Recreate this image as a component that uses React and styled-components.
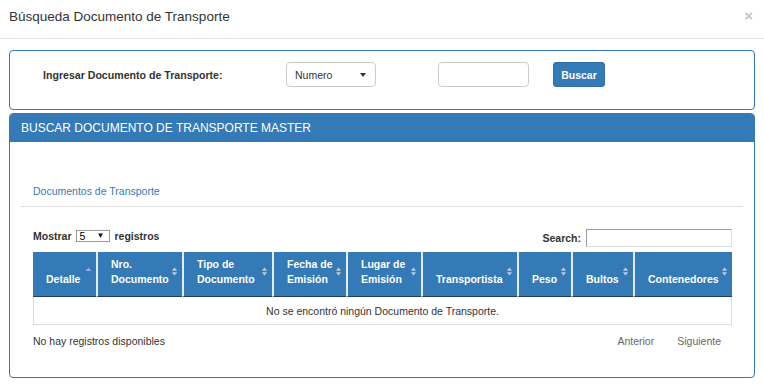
import React from "react";
import styled, { createGlobalStyle } from "styled-components";

const Global = createGlobalStyle`
  html, body { margin: 0; padding: 0; background: #fff; }
  body {
    font-family: "Liberation Sans", Arial, Helvetica, sans-serif;
    color: #333;
    font-size: 10.5px;
  }
  * { box-sizing: border-box; }
`;

const Page = styled.div`
  width: 764px;
`;

const Header = styled.div`
  height: 39px;
  padding: 0 9px;
  display: flex;
  align-items: center;
  justify-content: space-between;
  border-bottom: 1px solid #e5e5e5;
  padding-bottom: 4px;
`;

const Title = styled.h4`
  margin: 0;
  font-size: 13.5px;
  font-weight: normal;
  color: #333;
  line-height: 16px;
`;

const Close = styled.span`
  font-size: 15px;
  font-weight: bold;
  color: #c4c4c4;
  line-height: 1;
  margin-right: 2px;
  margin-top: -4px;
`;

const Body = styled.div`
  padding: 11px 9px 0;
`;

const Panel = styled.div`
  border: 1px solid #337ab7;
  border-radius: 4px;
  margin-top: ${(p) => (p.$spaced ? "3px" : "0")};
  height: ${(p) => p.$height}px;
  overflow: hidden;
`;

const FormRow = styled.div`
  display: flex;
  align-items: center;
  padding: 11px 0 0 33px;
`;

const Label = styled.label`
  width: 243px;
  font-weight: bold;
  font-size: 10.6px;
  color: #333;
`;

const SelectBox = styled.div`
  width: 90px;
  height: 25px;
  border: 1px solid #ccc;
  border-radius: 4px;
  display: flex;
  align-items: center;
  justify-content: space-between;
  padding: 0 9px 0 8px;
  margin-right: 62px;
  color: #333;
`;

const Caret = styled.span`
  width: 0;
  height: 0;
  border-left: 3.5px solid transparent;
  border-right: 3.5px solid transparent;
  border-top: 4px solid #333;
`;

const TextInput = styled.input`
  width: ${(p) => p.$width}px;
  height: ${(p) => p.$height}px;
  border: 1px solid #ccc;
  border-radius: 4px;
  margin: 0 ${(p) => p.$mr || 0}px 0 0;
  padding: 0 6px;
  font-family: inherit;
  outline: none;
`;

const Button = styled.button`
  width: 52px;
  height: 25px;
  background: #337ab7;
  border: 1px solid #2e6da4;
  border-radius: 3px;
  color: #fff;
  font-family: inherit;
  font-weight: bold;
  font-size: 10.5px;
  padding: 0;
`;

const PanelHeading = styled.div`
  height: 29px;
  background: #337ab7;
  color: #fff;
  font-size: 12px;
  line-height: 31px;
  padding: 0 11px;
  margin-top: -1px;
`;

const PanelBody = styled.div`
  padding: 30px 11px 0 10px;
`;

const Tabs = styled.div`
  display: flex;
  border-bottom: 1px solid #ddd;
`;

const Tab = styled.a`
  display: block;
  padding: 12px 13px 8px;
  line-height: 14px;
  color: #337ab7;
  text-decoration: none;
`;

const TableArea = styled.div`
  padding: 0 11px 0 13px;
`;

const Toolbar = styled.div`
  margin-top: 22px;
  height: 18px;
  display: flex;
  justify-content: space-between;
  align-items: flex-start;
`;

const LengthLabel = styled.label`
  display: flex;
  align-items: center;
  font-weight: bold;
  line-height: 12px;
  padding-top: 1px;
  gap: 3px;
`;

const MiniSelect = styled.span`
  width: 34px;
  height: 12px;
  border: 1px solid #9a9a9a;
  display: flex;
  align-items: center;
  justify-content: space-between;
  padding: 0 4px 0 3px;
  font-weight: normal;
  font-size: 10.5px;
  line-height: 10px;
  color: #000;
  margin: 0 2px 0 1px;
`;

const MiniArrow = styled.span`
  font-size: 8px;
  color: #111;
`;

const SearchLabel = styled.label`
  display: flex;
  align-items: center;
  font-weight: bold;
  gap: 5px;
  height: 18px;
`;

const SearchInput = styled.input`
  width: 146px;
  height: 18px;
  border: 1px solid;
  border-color: #9c9c9c #dcdcdc #dcdcdc #9c9c9c;
  padding: 0 3px;
  outline: none;
`;

const Table = styled.table`
  margin-top: 5px;
  width: 699px;
  table-layout: fixed;
  border-collapse: separate;
  border-spacing: 0;
`;

const Th = styled.th`
  position: relative;
  background: #337ab7;
  color: #fff;
  font-weight: bold;
  font-size: 10.5px;
  text-align: left;
  vertical-align: bottom;
  white-space: nowrap;
  height: 45px;
  padding: 0 8px 9px 13px;
  line-height: 15px;
  border-bottom: 1px solid #1e3f5e;
  border-left: ${(p) => (p.$first ? "none" : "2px solid #e3ebf3")};
`;

const SortIcon = styled.svg`
  position: absolute;
  right: 4px;
  top: 15px;
`;

const Td = styled.td`
  height: 28px;
  text-align: center;
  border: 1px solid #ddd;
  border-top: none;
  color: #333;
`;

const Footer = styled.div`
  display: flex;
  justify-content: space-between;
  align-items: center;
  padding-top: 9px;
  line-height: 14px;
`;

const Pager = styled.div`
  display: flex;
`;

const PageLink = styled.span`
  padding: 0 11px 0 12px;
  color: #666;
`;

const columns = [
  { w: 63, label: ["Detalle"], asc: true },
  { w: 86, label: ["Nro.", "Documento"] },
  { w: 90, label: ["Tipo de", "Documento"] },
  { w: 74, label: ["Fecha de", "Emisión"] },
  { w: 75, label: ["Lugar de", "Emisión"] },
  { w: 96, label: ["Transportista"] },
  { w: 54, label: ["Peso"] },
  { w: 62, label: ["Bultos"] },
  { w: 99, label: ["Contenedores"] },
];

function Sort({ asc }) {
  if (asc) {
    return (
      <SortIcon width="7" height="9" viewBox="0 0 7 9">
        <path d="M0.5 4 L3.5 0.5 L6.5 4 Z" fill="#9aa9e6" />
      </SortIcon>
    );
  }
  return (
    <SortIcon width="7" height="9" viewBox="0 0 7 9">
      <path d="M0.8 3.8 L3.5 0.6 L6.2 3.8 Z" fill="#b9cde3" />
      <path d="M0.8 5.2 L3.5 8.4 L6.2 5.2 Z" fill="#b9cde3" />
    </SortIcon>
  );
}

export default function App() {
  return (
    <Page>
      <Global />
      <Header>
        <Title>Búsqueda Documento de Transporte</Title>
        <Close>×</Close>
      </Header>
      <Body>
        <Panel $height={60}>
          <FormRow>
            <Label>Ingresar Documento de Transporte:</Label>
            <SelectBox>
              <span>Numero</span>
              <Caret />
            </SelectBox>
            <TextInput $width={91} $height={25} $mr={24} />
            <Button>Buscar</Button>
          </FormRow>
        </Panel>
        <Panel $spaced $height={265}>
          <PanelHeading>BUSCAR DOCUMENTO DE TRANSPORTE MASTER</PanelHeading>
          <PanelBody>
            <Tabs>
              <Tab>Documentos de Transporte</Tab>
            </Tabs>
            <TableArea>
              <Toolbar>
                <LengthLabel>
                  Mostrar
                  <MiniSelect>
                    5<MiniArrow>▼</MiniArrow>
                  </MiniSelect>
                  registros
                </LengthLabel>
                <SearchLabel>
                  Search:
                  <SearchInput />
                </SearchLabel>
              </Toolbar>
              <Table>
                <colgroup>
                  {columns.map((c, i) => (
                    <col key={i} style={{ width: c.w }} />
                  ))}
                </colgroup>
                <thead>
                  <tr>
                    {columns.map((c, i) => (
                      <Th key={i} $first={i === 0}>
                        {c.label.map((l, j) => (
                          <React.Fragment key={j}>
                            {j > 0 && <br />}
                            {l}
                          </React.Fragment>
                        ))}
                        <Sort asc={c.asc} />
                      </Th>
                    ))}
                  </tr>
                </thead>
                <tbody>
                  <tr>
                    <Td colSpan={9}>No se encontró ningún Documento de Transporte.</Td>
                  </tr>
                </tbody>
              </Table>
              <Footer>
                <span>No hay registros disponibles</span>
                <Pager>
                  <PageLink>Anterior</PageLink>
                  <PageLink>Siguiente</PageLink>
                </Pager>
              </Footer>
            </TableArea>
          </PanelBody>
        </Panel>
      </Body>
    </Page>
  );
}
